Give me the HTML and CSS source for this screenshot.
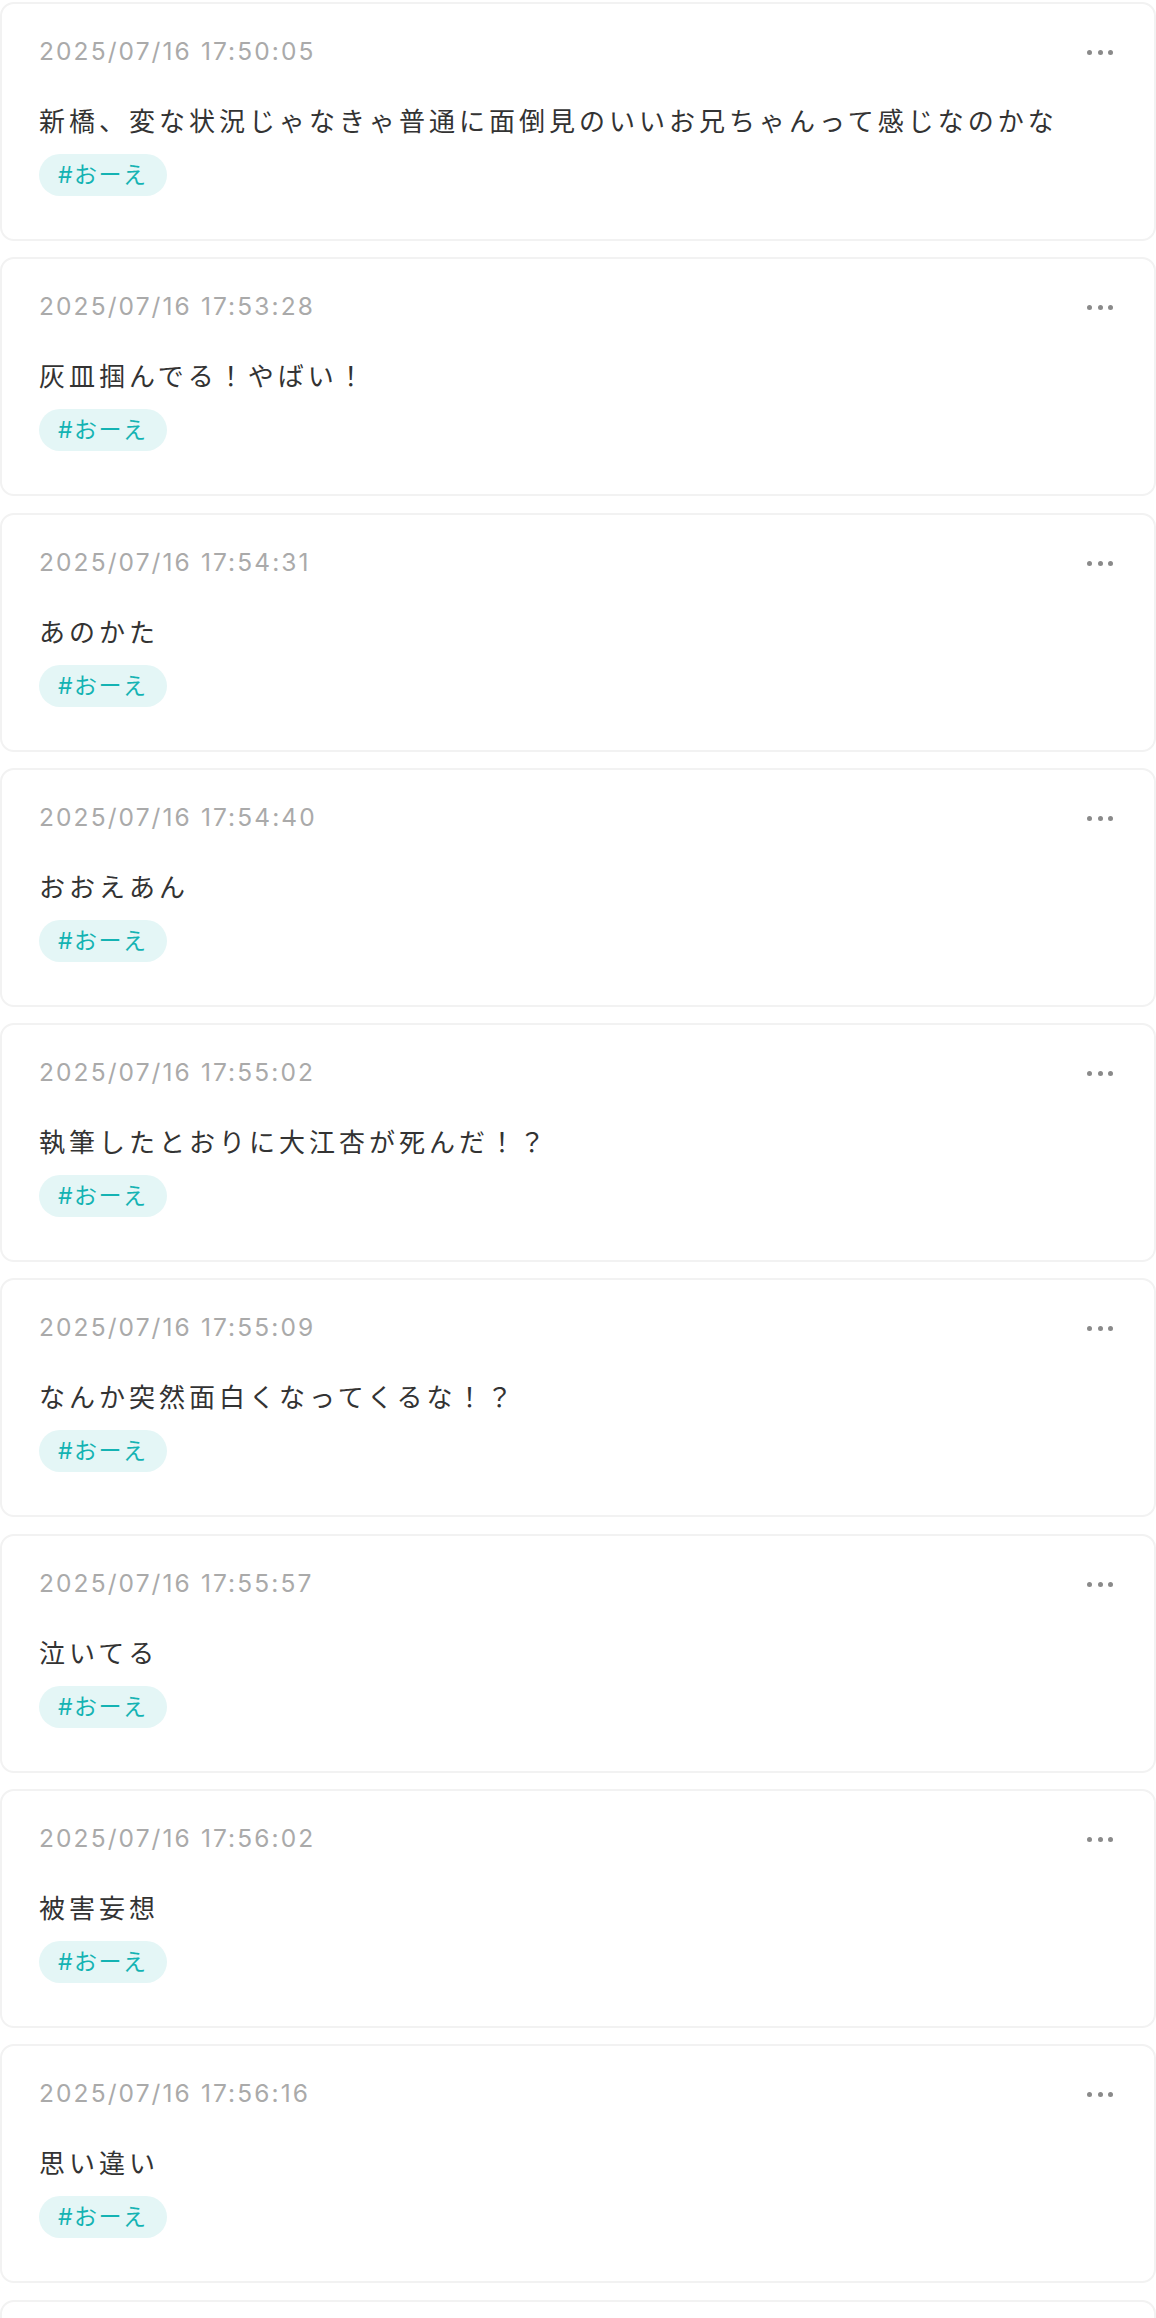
FILE: index.html
```html
<!DOCTYPE html>
<html lang="ja">
<head>
<meta charset="utf-8">
<link rel="stylesheet" href="styles.css">
</head>
<body>
<div class="list">
  <div class="card">
    <div class="head"><span class="time">2025/07/16 17:50:05</span><span class="more"><i></i><i></i><i></i></span></div>
    <p class="text">新橋、変な状況じゃなきゃ普通に面倒見のいいお兄ちゃんって感じなのかな</p>
    <span class="tag">#おーえ</span>
  </div>
  <div class="card">
    <div class="head"><span class="time">2025/07/16 17:53:28</span><span class="more"><i></i><i></i><i></i></span></div>
    <p class="text">灰皿掴んでる！やばい！</p>
    <span class="tag">#おーえ</span>
  </div>
  <div class="card">
    <div class="head"><span class="time">2025/07/16 17:54:31</span><span class="more"><i></i><i></i><i></i></span></div>
    <p class="text">あのかた</p>
    <span class="tag">#おーえ</span>
  </div>
  <div class="card">
    <div class="head"><span class="time">2025/07/16 17:54:40</span><span class="more"><i></i><i></i><i></i></span></div>
    <p class="text">おおえあん</p>
    <span class="tag">#おーえ</span>
  </div>
  <div class="card">
    <div class="head"><span class="time">2025/07/16 17:55:02</span><span class="more"><i></i><i></i><i></i></span></div>
    <p class="text">執筆したとおりに大江杏が死んだ！？</p>
    <span class="tag">#おーえ</span>
  </div>
  <div class="card">
    <div class="head"><span class="time">2025/07/16 17:55:09</span><span class="more"><i></i><i></i><i></i></span></div>
    <p class="text">なんか突然面白くなってくるな！？</p>
    <span class="tag">#おーえ</span>
  </div>
  <div class="card">
    <div class="head"><span class="time">2025/07/16 17:55:57</span><span class="more"><i></i><i></i><i></i></span></div>
    <p class="text">泣いてる</p>
    <span class="tag">#おーえ</span>
  </div>
  <div class="card">
    <div class="head"><span class="time">2025/07/16 17:56:02</span><span class="more"><i></i><i></i><i></i></span></div>
    <p class="text">被害妄想</p>
    <span class="tag">#おーえ</span>
  </div>
  <div class="card">
    <div class="head"><span class="time">2025/07/16 17:56:16</span><span class="more"><i></i><i></i><i></i></span></div>
    <p class="text">思い違い</p>
    <span class="tag">#おーえ</span>
  </div>
  <div class="card card-last"></div>
</div>
</body>
</html>
```

FILE: styles.css
```css
html, body {
  margin: 0;
  padding: 0;
  background: #ffffff;
}
body {
  font-family: "Inter", "Noto Sans CJK JP", sans-serif;
  color: #333333;
}
.list {
  padding-top: 2px;
  display: flex;
  flex-direction: column;
  gap: 16.3px;
}
.card {
  border: 2px solid #f2f2f2;
  border-radius: 14px;
  padding: 30px 37px 43px 37px;
  display: flex;
  flex-direction: column;
  align-items: flex-start;
  background: #fff;
}
.card-last {
  height: 160px;
}
.head {
  align-self: stretch;
  display: flex;
  justify-content: space-between;
  align-items: center;
  height: 34px;
}
.time {
  font-size: 24.5px;
  line-height: 34px;
  letter-spacing: 2.1px;
  color: #aaaaaa;
}
.more {
  display: flex;
  gap: 5.5px;
  margin-right: 4px;
  margin-top: 3px;
}
.more i {
  display: block;
  width: 5px;
  height: 5px;
  border-radius: 50%;
  background: #8a8a8a;
}
.text {
  margin: 32px 0 0 0;
  font-family: "Noto Sans CJK JP", sans-serif;
  font-size: 26px;
  line-height: 40px;
  letter-spacing: 4px;
  color: #333333;
}
.tag {
  margin-top: 14px;
  height: 42px;
  line-height: 42px;
  padding: 0 19px;
  border-radius: 21px;
  background: #e4f6f6;
  color: #14b3b3;
  font-size: 23px;
  letter-spacing: 1.5px;
}
```
